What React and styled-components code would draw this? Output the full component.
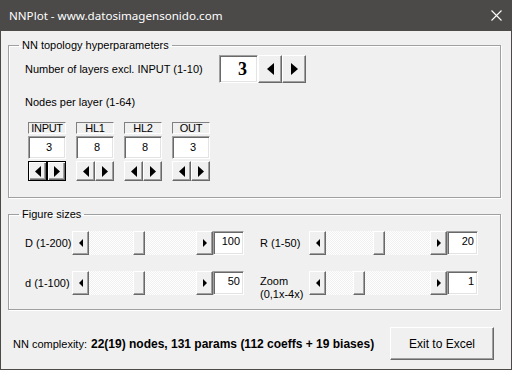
import React from 'react';
import styled, { createGlobalStyle } from 'styled-components';

const GlobalStyle = createGlobalStyle`
  body {
    margin: 0;
    background: #fff;
    font-family: "Liberation Sans", Arial, sans-serif;
  }
  * { box-sizing: border-box; }
`;

const layers = [
  { name: 'INPUT', value: 3, focused: true },
  { name: 'HL1', value: 8 },
  { name: 'HL2', value: 8 },
  { name: 'OUT', value: 3 },
];

const sliders = [
  { label: 'D (1-200)', value: 100, labelWidth: 47, track: 141, thumb: 44 },
  { label: 'R (1-50)', value: 20, labelWidth: 49, track: 138, thumb: 47 },
  { label: 'd (1-100)', value: 50, labelWidth: 47, track: 141, thumb: 44 },
  { label: 'Zoom\n(0,1x-4x)', value: 1, labelWidth: 49, track: 138, thumb: 27, low: true },
];

const Arrow = ({ dir, w = 5, h = 9 }) => (
  <svg width={w} height={h} viewBox={`0 0 ${w} ${h}`}>
    {dir === 'left' ? (
      <polygon points={`${w},0 ${w},${h} 0,${h / 2}`} fill="#000" />
    ) : (
      <polygon points={`0,0 0,${h} ${w},${h / 2}`} fill="#000" />
    )}
  </svg>
);

const App = () => {
  return (
    <>
      <GlobalStyle />
      <Window>
        <TitleBar>
          <Title>NNPlot - www.datosimagensonido.com</Title>
          <svg width="11" height="11" viewBox="0 0 11 11">
            <path d="M0.5 0.5 L10.5 10.5 M10.5 0.5 L0.5 10.5" stroke="#fff" strokeWidth="1.1" />
          </svg>
        </TitleBar>

        <Body>
          <Frame>
            <Legend>NN topology hyperparameters</Legend>
            <FrameContent $bottom={16}>
              <LayersRow>
                <RowLabel>Number of layers excl. INPUT (1-10)</RowLabel>
                <BigBox>3</BigBox>
                <SpinButton $w={24} $h={28}><Arrow dir="left" w={7} h={12} /></SpinButton>
                <SpinButton $w={24} $h={28}><Arrow dir="right" w={7} h={12} /></SpinButton>
              </LayersRow>

              <NodesLabel>Nodes per layer (1-64)</NodesLabel>

              <Columns>
                {layers.map((l) => (
                  <Column key={l.name}>
                    <LayerName>{l.name}</LayerName>
                    <LayerValue>{l.value}</LayerValue>
                    <ButtonPair>
                      <SpinButton $w={19} $h={20} $focused={l.focused}><Arrow dir="left" w={6} h={11} /></SpinButton>
                      <SpinButton $w={19} $h={20} $focused={l.focused}><Arrow dir="right" w={6} h={11} /></SpinButton>
                    </ButtonPair>
                  </Column>
                ))}
              </Columns>
            </FrameContent>
          </Frame>

          <Frame $top={9}>
            <Legend>Figure sizes</Legend>
            <FrameContent $bottom={14}>
              <SliderGrid>
                {sliders.map((s) => (
                  <SliderRow key={s.label}>
                    <SliderLabel $w={s.labelWidth} $low={s.low}>{s.label}</SliderLabel>
                    <ScrollBar $w={s.track}>
                      <ScrollButton><Arrow dir="left" w={4} h={8} /></ScrollButton>
                      <Track>
                        <Thumb style={{ marginLeft: s.thumb }} />
                      </Track>
                      <ScrollButton><Arrow dir="right" w={4} h={8} /></ScrollButton>
                    </ScrollBar>
                    <ValueBox>{s.value}</ValueBox>
                  </SliderRow>
                ))}
              </SliderGrid>
            </FrameContent>
          </Frame>

          <Footer>
            <Complexity>
              NN complexity:
              <Strong>22(19) nodes, 131 params (112 coeffs + 19 biases)</Strong>
            </Complexity>
            <ExitButton>Exit to Excel</ExitButton>
          </Footer>
        </Body>
      </Window>
    </>
  );
};

const Window = styled.div`
  width: 512px;
  height: 370px;
  border: 1px solid #4b4a48;
  border-top: none;
  background: #f0f0f0;
  display: flex;
  flex-direction: column;
  font-size: 11px;
  color: #000;
`;

const TitleBar = styled.div`
  height: 31px;
  flex-shrink: 0;
  background: #4b4a48;
  display: flex;
  align-items: center;
  justify-content: space-between;
  padding: 0 9px 0 8px;
`;

const Title = styled.div`
  color: #fff;
  font-family: "Noto Sans", "Open Sans", sans-serif;
  font-size: 11.6px;
`;

const Body = styled.div`
  flex: 1;
  padding: 7px 10px 0 7px;
  display: flex;
  flex-direction: column;
`;

const Frame = styled.fieldset`
  margin: ${(p) => p.$top || 0}px 0 0;
  padding: 0;
  min-width: 0;
  border: 1px solid #a0a0a0;
  box-shadow: inset 1px 1px 0 #fff, 1px 1px 0 #fff;
`;

const Legend = styled.legend`
  margin-left: 10px;
  padding: 0 3px;
  font-size: 11px;
  line-height: 14px;
`;

const FrameContent = styled.div`
  padding: 0 0 ${(p) => p.$bottom}px 16px;
`;

const LayersRow = styled.div`
  margin-top: 3px;
  display: flex;
  align-items: center;
  height: 28px;
`;

const RowLabel = styled.div`
  width: 194px;
`;

const sunken = `
  background: #fff;
  border-top: 1px solid #a0a0a0;
  border-left: 1px solid #a0a0a0;
  border-bottom: 1px solid #fff;
  border-right: 1px solid #fff;
  box-shadow: inset 1px 1px 0 #696969, inset -1px -1px 0 #e3e3e3;
`;

const raised = `
  background: #f0f0f0;
  border-top: 1px solid #fff;
  border-left: 1px solid #fff;
  border-bottom: 1px solid #696969;
  border-right: 1px solid #696969;
  box-shadow: inset -1px -1px 0 #a0a0a0;
`;

const BigBox = styled.div`
  ${sunken}
  width: 39px;
  height: 28px;
  text-align: right;
  padding-right: 10px;
  font-family: "Liberation Serif", "Times New Roman", serif;
  font-weight: bold;
  font-size: 18px;
  line-height: 26px;
`;

const SpinButton = styled.div`
  ${raised}
  width: ${(p) => p.$w}px;
  height: ${(p) => p.$h}px;
  display: flex;
  align-items: center;
  justify-content: center;
  ${(p) => p.$focused && `
    border: 1px solid #000;
    box-shadow: inset 1px 1px 0 #fff, inset -1px -1px 0 #696969, inset -2px -2px 0 #a0a0a0;
  `}
`;

const NodesLabel = styled.div`
  margin-top: 12px;
  line-height: 14px;
`;

const Columns = styled.div`
  margin-top: 13px;
  padding-left: 3px;
  display: flex;
  gap: 10px;
`;

const Column = styled.div`
  width: 38px;
  display: flex;
  flex-direction: column;
  gap: 2px;
`;

const LayerName = styled.div`
  height: 12px;
  border-top: 1px solid #808080;
  border-left: 1px solid #808080;
  border-bottom: 1px solid #fff;
  border-right: 1px solid #fff;
  text-align: center;
  font-size: 11px;
  line-height: 10px;
  letter-spacing: -0.3px;
`;

const LayerValue = styled.div`
  ${sunken}
  height: 23px;
  text-align: center;
  padding-left: 4px;
  line-height: 21px;
`;

const ButtonPair = styled.div`
  display: flex;
`;

const SliderGrid = styled.div`
  margin-top: 10px;
  display: grid;
  grid-template-columns: 219px 218px;
  column-gap: 16px;
  row-gap: 16px;
`;

const SliderRow = styled.div`
  display: flex;
  align-items: center;
  height: 24px;
`;

const SliderLabel = styled.div`
  width: ${(p) => p.$w}px;
  white-space: pre;
  line-height: 13px;
  padding-top: ${(p) => (p.$low ? 10 : 0)}px;
`;

const ScrollBar = styled.div`
  width: ${(p) => p.$w}px;
  height: 24px;
  display: flex;
`;

const ScrollButton = styled.div`
  ${raised}
  width: 17px;
  height: 24px;
  flex-shrink: 0;
  display: flex;
  align-items: center;
  justify-content: center;
`;

const Track = styled.div`
  flex: 1;
  height: 24px;
  background-color: #fff;
  background-image: repeating-conic-gradient(#f0f0f0 0 25%, #fff 0 50%);
  background-size: 2px 2px;
`;

const Thumb = styled.div`
  ${raised}
  width: 12px;
  height: 24px;
`;

const ValueBox = styled.div`
  ${sunken}
  width: 31px;
  height: 24px;
  text-align: right;
  padding-right: 3px;
  line-height: 18px;
`;

const Footer = styled.div`
  margin-top: 17px;
  display: flex;
  align-items: center;
  justify-content: space-between;
  padding: 0 7px 0 5px;
`;

const Complexity = styled.div`
  font-size: 11px;
`;

const Strong = styled.span`
  font-weight: bold;
  font-size: 12px;
  margin-left: 4px;
`;

const ExitButton = styled.div`
  ${raised}
  width: 104px;
  height: 33px;
  display: flex;
  align-items: center;
  justify-content: center;
  font-size: 12px;
`;

export default App;
